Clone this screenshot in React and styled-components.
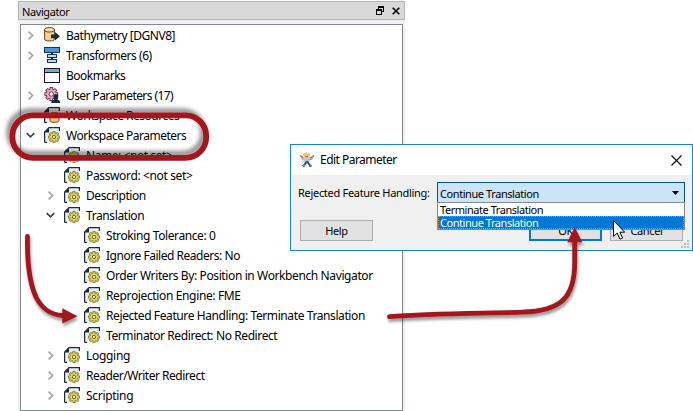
import React from "react";
import styled, { createGlobalStyle, css } from "styled-components";

const Global = createGlobalStyle`
  * { box-sizing: border-box; }
  body { margin: 0; background: #fff; overflow: hidden; }
`;

const Stage = styled.main`
  position: relative;
  width: 693px;
  height: 411px;
  overflow: hidden;
  background: #fff;
  color: #000;
  font: 12px/20px "Noto Sans", sans-serif;
`;

const Navigator = styled.section`
  display: flex;
  flex-direction: column;
  width: 387px;
  height: 411px;
  margin-left: 18px;
  padding-top: 1px;
`;

const NavTitle = styled.header`
  display: flex;
  align-items: center;
  height: 19px;
  flex: none;
  padding: 0 4px 0 3px;
  background: #d9d9d9;
  border: 1px solid #b4b4b4;
  font-size: 11px;
  line-height: 17px;
`;

const NavName = styled.span`
  flex: 1;
  padding-top: 1px;
  letter-spacing: ${(p) => p.$tracking}px;
`;

const TitleIcons = styled.div`
  display: flex;
  align-items: center;
  gap: 8px;
`;

const NavBody = styled.div`
  flex: 1;
  padding: 4px 2px 0;
  background: #f0f0f0;
`;

const Tree = styled.ul`
  height: 387px;
  margin: 0;
  padding: 0;
  list-style: none;
  background: #fff;
  border: 1px solid #828790;
`;

const Row = styled.li`
  display: flex;
  align-items: center;
  height: 20px;
  padding-left: ${(p) => 4 + p.$depth * 20}px;
  white-space: nowrap;
`;

const Toggle = styled.span`
  display: flex;
  justify-content: center;
  width: 11px;
  margin-right: 8px;
`;

const IconSlot = styled.span`
  display: flex;
  width: 16px;
  height: 16px;
  margin-right: 6px;
`;

const Label = styled.span`
  letter-spacing: ${(p) => p.$tracking}px;
  padding-top: 1px;
`;

const Dialog = styled.section`
  position: absolute;
  left: 290px;
  top: 144px;
  width: 403px;
  height: 107px;
  background: #f0f0f0;
  border: 1px solid #1883d7;
`;

const DialogTitle = styled.header`
  display: flex;
  align-items: center;
  height: 30px;
  padding: 0 10px 0 8px;
  background: #fff;
`;

const DialogName = styled.span`
  flex: 1;
  padding-left: 5px;
  letter-spacing: -0.53px;
`;

const Field = styled.div`
  display: flex;
  align-items: center;
  justify-content: space-between;
  height: 21px;
  margin: 7px 7px 0;
  font-size: 11px;
`;

const FieldLabel = styled.label`
  letter-spacing: ${(p) => p.$tracking}px;
  padding-top: 1px;
  white-space: nowrap;
`;

const Combo = styled.div`
  display: flex;
  align-items: center;
  justify-content: space-between;
  width: 248px;
  height: 21px;
  padding: 1px 5px 0 2px;
  background: #cce4f7;
  border: 1px solid #005499;
`;

const Options = styled.div`
  position: absolute;
  left: 146px;
  top: 57px;
  width: 248px;
  height: 28px;
  background: #fff;
  border: 1px solid #828790;
  font-size: 11px;
`;

const Option = styled.div`
  height: 13px;
  padding-left: 1px;
  border: 1px dotted transparent;
  line-height: 11px;
  letter-spacing: -0.45px;
  white-space: nowrap;
  ${(p) =>
    p.$selected &&
    css`
      background: #0078d7;
      color: #fff;
      border-color: #e08b43;
    `}
`;

const Buttons = styled.footer`
  display: flex;
  gap: 8px;
  margin: 17px 9px 0;
`;

const Button = styled.button`
  width: 73px;
  height: 21px;
  padding: 0;
  background: #e1e1e1;
  border: ${(p) => (p.$primary ? "2px solid #0078d7" : "1px solid #adadad")};
  font: 11px/17px "Noto Sans", sans-serif;
  letter-spacing: -0.35px;
  color: #000;
  margin-right: ${(p) => (p.$first ? "auto" : 0)};
`;

const Overlay = styled.svg`
  position: absolute;
  left: 0;
  top: 0;
  pointer-events: none;
`;

const Grip = styled.svg`
  position: absolute;
  right: 3px;
  bottom: 2px;
`;

const Chevron = ({ open }) =>
  open ? (
    <svg width="11" height="11" viewBox="0 0 11 11">
      <path d="M1.7 3.2 5.5 6.8 9.3 3.2" fill="none" stroke="#404040" strokeWidth="1.7" />
    </svg>
  ) : (
    <svg width="11" height="11" viewBox="0 0 11 11">
      <path d="M3.6 1.6 7.6 5.5 3.6 9.4" fill="none" stroke="#a6a6a6" strokeWidth="1.7" />
    </svg>
  );

const Page = () => (
  <path d="M5 .6H15.4V15.4H.6V5M5 .6V5H.6" fill="#e8eef2" />
);

const PageEdge = () => (
  <>
    <path d="M.6 15.5V5L5 .6H15.4V4M.6 15.4H3" fill="none" stroke="#1d2b36" strokeWidth="1.2" />
    <path d="M.6 5.4 5 .6V5.4Z" fill="#1d2b36" />
  </>
);

const teeth = [0, 45, 90, 135, 180, 225, 270, 315];

const GearPage = () => (
  <svg width="16" height="16" viewBox="0 0 16 16">
    <Page />
    <PageEdge />
    <g transform="translate(10 10)">
      {teeth.map((a) => (
        <rect key={a} x="-1.4" y="-5.8" width="2.8" height="4" transform={`rotate(${a})`} fill="#5c5a2c" />
      ))}
      <circle r="4.4" fill="#5c5a2c" />
      {teeth.map((a) => (
        <rect key={a} x="-.75" y="-5.2" width="1.5" height="3" transform={`rotate(${a})`} fill="#ead63e" />
      ))}
      <circle r="3.8" fill="#ead63e" />
      <circle r="1.7" fill="#e8eef2" stroke="#5c5a2c" strokeWidth=".9" />
    </g>
  </svg>
);

const ResourcePage = () => (
  <svg width="16" height="16" viewBox="0 0 16 16">
    <Page />
    <PageEdge />
    <path d="M6 7.5C6 4.8 15 4.8 15 7.5V13.5C15 16 6 16 6 13.5Z" fill="#f7bd6a" stroke="#7d4b1b" />
    <path d="M6 7.5C6 9.5 15 9.5 15 7.5" fill="none" stroke="#7d4b1b" strokeWidth=".8" />
  </svg>
);

const Database = () => (
  <svg width="16" height="16" viewBox="0 0 16 16">
    <path d="M.6 3V12.3C.6 14.5 10.4 14.5 10.4 12.3V3" fill="#fed08a" stroke="#60401e" />
    <ellipse cx="5.5" cy="2.8" rx="4.9" ry="2.2" fill="#ffe0ad" stroke="#60401e" />
    <path d="M7 7.5H11V5L16 9.3 11 13.6V11.2H7Z" fill="#172e3e" />
  </svg>
);

const Transformers = () => (
  <svg width="16" height="16" viewBox="0 0 16 16" shapeRendering="crispEdges">
    <path d="M7 5H9V15H7Z" fill="#16364f" />
    <rect x=".5" y=".5" width="15" height="5" fill="#5293d6" stroke="#16364f" />
    <rect x="3.5" y="7.5" width="9" height="3" fill="#b9dcf4" stroke="#16364f" />
    <rect x="3.5" y="12.5" width="9" height="3" fill="#b9dcf4" stroke="#16364f" />
  </svg>
);

const Bookmark = () => (
  <svg width="16" height="16" viewBox="0 0 16 16" shapeRendering="crispEdges">
    <rect x=".5" y="1.5" width="15" height="14" fill="#fff" stroke="#2c1226" />
    <rect x="1" y="2" width="14" height="3" fill="#55bfc4" />
    <rect x="1" y="5" width="14" height="1" fill="#2c1226" />
  </svg>
);

const UserGear = () => (
  <svg width="16" height="16" viewBox="0 0 16 16">
    <g transform="translate(7.3 7)">
      {teeth.map((a) => (
        <rect key={a} x="-1.8" y="-7" width="3.6" height="4" rx=".5" transform={`rotate(${a})`} fill="#6a2f49" />
      ))}
      <circle r="5.4" fill="#6a2f49" />
      {teeth.map((a) => (
        <rect key={a} x="-.9" y="-6.1" width="1.8" height="3" transform={`rotate(${a})`} fill="#eba6c5" />
      ))}
      <circle r="4.6" fill="#eba6c5" />
      <circle r="2.2" fill="#fff" stroke="#6a2f49" />
    </g>
    <path d="M7.5 16V14L10.3 12.4C8.7 9.8 9.4 7 11.9 7S15.1 9.8 13.5 12.4L16 14V16Z" fill="#152b39" />
  </svg>
);

const icons = {
  database: Database,
  transformers: Transformers,
  bookmark: Bookmark,
  user: UserGear,
  resource: ResourcePage,
  gear: GearPage,
};

const rows = [
  [0, "closed", "database", "Bathymetry [DGNV8]", -0.47],
  [0, "closed", "transformers", "Transformers (6)", -0.45],
  [0, "", "bookmark", "Bookmarks", -0.5],
  [0, "closed", "user", "User Parameters (17)", -0.58],
  [0, "", "resource", "Workspace Resources", -0.5],
  [0, "open", "gear", "Workspace Parameters", -0.5],
  [1, "", "gear", "Name: <not set>", -0.43],
  [1, "", "gear", "Password: <not set>", -0.36],
  [1, "closed", "gear", "Description", -0.44],
  [1, "open", "gear", "Translation", -0.4],
  [2, "", "gear", "Stroking Tolerance: 0", -0.4],
  [2, "", "gear", "Ignore Failed Readers: No", -0.47],
  [2, "", "gear", "Order Writers By: Position in Workbench Navigator", -0.39],
  [2, "", "gear", "Reprojection Engine: FME", -0.36],
  [2, "", "gear", "Rejected Feature Handling: Terminate Translation", -0.4],
  [2, "", "gear", "Terminator Redirect: No Redirect", -0.4],
  [1, "closed", "gear", "Logging", -0.3],
  [1, "closed", "gear", "Reader/Writer Redirect", -0.48],
  [1, "closed", "gear", "Scripting", -0.3],
];

const TreeRow = ({ depth, state, icon, text, tracking }) => {
  const Icon = icons[icon];
  return (
    <Row $depth={depth}>
      <Toggle>{state && <Chevron open={state === "open"} />}</Toggle>
      <IconSlot>
        <Icon />
      </IconSlot>
      <Label $tracking={tracking}>{text}</Label>
    </Row>
  );
};

const Worker = () => (
  <svg width="16" height="16" viewBox="0 0 16 16">
    <path d="M1 3 5 5.5 11 5.5 15 3.5 14 7 10.5 8 10 11H5.5L5 8 2 6.5Z" fill="#c4c0bd" />
    <path d="M.8 3.4 4.2 5.6M15 3.4 11.4 6" stroke="#777" strokeWidth="1.2" />
    <path d="M2.4 6.6 5.4 8.4M13.6 6.6 10.4 8.2" stroke="#8d8580" strokeWidth=".9" />
    <circle cx="7.5" cy="4" r="2.9" fill="#f5c9a2" />
    <path d="M3.9 3.4C4.3-.4 10.6-.4 11.2 3.2Z" fill="#f0a332" />
    <path d="M5.6 1.9H9.4" stroke="#fff2a8" strokeWidth="1.2" />
    <path d="M6.5 4.7H9" stroke="#c33b27" />
    <path d="M5.4 7.4 3 10.6" stroke="#d9d4d0" strokeWidth="1.8" />
    <path d="M8 9.4 5 13.4M8 9.4 11.2 13.6" stroke="#2455a5" strokeWidth="2" />
    <path d="M3.4 13.4 5.4 15M10.4 14.8 12.6 13.6" stroke="#453a35" strokeWidth="1.2" />
  </svg>
);

export default function App() {
  return (
    <Stage>
      <Global />
      <Navigator>
        <NavTitle>
          <NavName $tracking={-0.4}>Navigator</NavName>
          <TitleIcons>
            <svg width="8" height="9" viewBox="0 0 8 9" shapeRendering="crispEdges">
              <path d="M2 0H8V6H6V5H7V2H3V3H2ZM0 3H6V9H0ZM1 5V8H5V5Z" fill="#000" fillRule="evenodd" />
            </svg>
            <svg width="8" height="8" viewBox="0 0 8 8">
              <path d="M.7.7 7.3 7.3M7.3.7.7 7.3" stroke="#000" strokeWidth="1.6" />
            </svg>
          </TitleIcons>
        </NavTitle>
        <NavBody>
          <Tree>
            {rows.map(([depth, state, icon, text, tracking]) => (
              <TreeRow key={text} {...{ depth, state, icon, text, tracking }} />
            ))}
          </Tree>
        </NavBody>
      </Navigator>

      <Dialog>
        <DialogTitle>
          <Worker />
          <DialogName>Edit Parameter</DialogName>
          <svg width="11" height="11" viewBox="0 0 11 11">
            <path d="M.5.5 10.5 10.5M10.5.5.5 10.5" stroke="#000" strokeWidth="1.1" />
          </svg>
        </DialogTitle>
        <Field>
          <FieldLabel $tracking={-0.3}>Rejected Feature Handling:</FieldLabel>
          <Combo>
            <FieldLabel as="span" $tracking={-0.42}>Continue Translation</FieldLabel>
            <svg width="7" height="4" viewBox="0 0 7 4">
              <path d="M0 0H7L3.5 4Z" fill="#000" />
            </svg>
          </Combo>
        </Field>
        <Buttons>
          <Button $first>Help</Button>
          <Button $primary>OK</Button>
          <Button>Cancel</Button>
        </Buttons>
        <Grip width="8" height="8" viewBox="0 0 8 8" shapeRendering="crispEdges">
          <path d="M6 0H8V2H6ZM3 3H5V5H3ZM6 3H8V5H6ZM0 6H2V8H0ZM3 6H5V8H3ZM6 6H8V8H6Z" fill="#bcbcbc" />
        </Grip>
        <Options>
          <Option>Terminate Translation</Option>
          <Option $selected>Continue Translation</Option>
        </Options>
      </Dialog>

      <Overlay width="693" height="411" viewBox="0 0 693 411">
        <defs>
          <filter id="ringShadow" x="-10%" y="-35%" width="120%" height="170%">
            <feDropShadow dx="-3" dy="-4" stdDeviation="2.2" floodColor="#000" floodOpacity=".45" />
          </filter>
          <filter id="arrowShadow" x="-20%" y="-20%" width="140%" height="140%">
            <feDropShadow dx="1" dy="3" stdDeviation="1.8" floodColor="#000" floodOpacity=".4" />
          </filter>
        </defs>
        <rect x="12.4" y="115.4" width="193.8" height="42.4" rx="20.5" fill="none" stroke="#a3151f" strokeWidth="5.8" filter="url(#ringShadow)" />
        <g filter="url(#arrowShadow)" fill="none" stroke="#a3151f" strokeLinecap="round">
          <path d="M27.5 236.5C27 262 29 282 36 297C42 309 50 314.5 63 315.5" strokeWidth="4.8" />
          <path d="M62.3 308.3 77.5 316.3 62.3 323.5Z" fill="#a3151f" stroke="none" />
        </g>
        <g filter="url(#arrowShadow)" fill="none" stroke="#a3151f" strokeLinecap="round">
          <path d="M389.5 316.7C430 313.5 480 313.5 522 312.2C562 311 574.7 297 574.7 262V241" strokeWidth="4.8" />
          <path d="M574.7 227 582.3 242.2H567.3Z" fill="#a3151f" stroke="none" />
        </g>
        <path d="M613.5 220.5V236.5L617.2 233 620 239.2 622.6 238 619.9 232.2H624.7Z" fill="#fff" stroke="#000" strokeWidth="1" />
      </Overlay>
    </Stage>
  );
}
